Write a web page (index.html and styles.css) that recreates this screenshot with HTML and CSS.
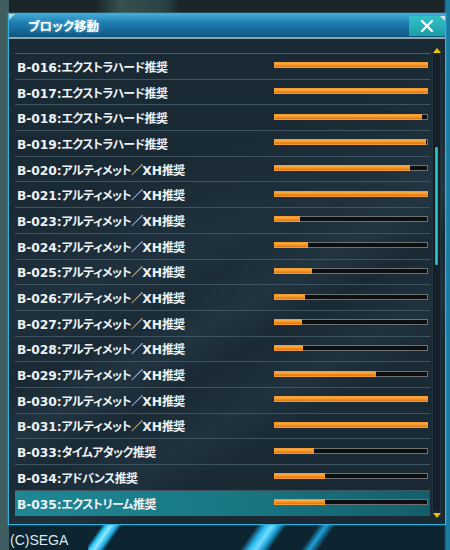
FILE: index.html
```html
<!DOCTYPE html>
<html lang="ja">
<head>
<meta charset="utf-8">
<title>ブロック移動</title>
<link rel="stylesheet" href="styles.css">
</head>
<body>
<div class="scene">
  <div class="window">
    <div class="titlebar">
      <span class="title">ブロック移動</span>
      <button class="close" aria-label="閉じる">
        <svg width="14" height="14" viewBox="0 0 14 14"><path d="M2 2 L12 12 M12 2 L2 12" stroke="#fff" stroke-width="2.2" stroke-linecap="round"/></svg>
      </button>
    </div>
    <div class="rule"></div>
    <div class="body">
      <ul class="list">
        <li class="row"><span class="name"><span class="code">B-016:</span>エクストラハード推奨</span><span class="bar"><span class="fill" style="width:100%"></span></span></li>
        <li class="row"><span class="name"><span class="code">B-017:</span>エクストラハード推奨</span><span class="bar"><span class="fill" style="width:100%"></span></span></li>
        <li class="row"><span class="name"><span class="code">B-018:</span>エクストラハード推奨</span><span class="bar"><span class="fill" style="width:96%"></span></span></li>
        <li class="row"><span class="name"><span class="code">B-019:</span>エクストラハード推奨</span><span class="bar"><span class="fill" style="width:99%"></span></span></li>
        <li class="row"><span class="name"><span class="code">B-020:</span>アルティメット／<span class="code">XH</span>推奨</span><span class="bar"><span class="fill" style="width:88%"></span></span></li>
        <li class="row"><span class="name"><span class="code">B-021:</span>アルティメット／<span class="code">XH</span>推奨</span><span class="bar"><span class="fill" style="width:100%"></span></span></li>
        <li class="row"><span class="name"><span class="code">B-023:</span>アルティメット／<span class="code">XH</span>推奨</span><span class="bar"><span class="fill" style="width:16%"></span></span></li>
        <li class="row"><span class="name"><span class="code">B-024:</span>アルティメット／<span class="code">XH</span>推奨</span><span class="bar"><span class="fill" style="width:21%"></span></span></li>
        <li class="row"><span class="name"><span class="code">B-025:</span>アルティメット／<span class="code">XH</span>推奨</span><span class="bar"><span class="fill" style="width:24%"></span></span></li>
        <li class="row"><span class="name"><span class="code">B-026:</span>アルティメット／<span class="code">XH</span>推奨</span><span class="bar"><span class="fill" style="width:19%"></span></span></li>
        <li class="row"><span class="name"><span class="code">B-027:</span>アルティメット／<span class="code">XH</span>推奨</span><span class="bar"><span class="fill" style="width:17%"></span></span></li>
        <li class="row"><span class="name"><span class="code">B-028:</span>アルティメット／<span class="code">XH</span>推奨</span><span class="bar"><span class="fill" style="width:18%"></span></span></li>
        <li class="row"><span class="name"><span class="code">B-029:</span>アルティメット／<span class="code">XH</span>推奨</span><span class="bar"><span class="fill" style="width:66%"></span></span></li>
        <li class="row"><span class="name"><span class="code">B-030:</span>アルティメット／<span class="code">XH</span>推奨</span><span class="bar"><span class="fill" style="width:100%"></span></span></li>
        <li class="row"><span class="name"><span class="code">B-031:</span>アルティメット／<span class="code">XH</span>推奨</span><span class="bar"><span class="fill" style="width:100%"></span></span></li>
        <li class="row"><span class="name"><span class="code">B-033:</span>タイムアタック推奨</span><span class="bar"><span class="fill" style="width:25%"></span></span></li>
        <li class="row"><span class="name"><span class="code">B-034:</span>アドバンス推奨</span><span class="bar"><span class="fill" style="width:32%"></span></span></li>
        <li class="row selected"><span class="name"><span class="code">B-035:</span>エクストリーム推奨</span><span class="bar"><span class="fill" style="width:32%"></span></span></li>
      </ul>
      <div class="scroll">
        <span class="arrow up"></span>
        <div class="track"><span class="thumb"></span></div>
        <span class="arrow down"></span>
      </div>
    </div>
  </div>
  <div class="copy">(C)SEGA</div>
</div>
</body>
</html>
```

FILE: styles.css
```css
* { box-sizing: border-box; }
html, body { margin: 0; padding: 0; }
body {
  width: 450px;
  height: 550px;
  overflow: hidden;
  font-family: "Noto Sans CJK JP", "Noto Sans", sans-serif;
  background:
    linear-gradient(125deg, transparent 0 18%, #28c8ff 24%, #8fe8ff 30%, #20a8e0 38%, transparent 44%) 88px 525px / 60px 25px no-repeat,
    linear-gradient(125deg, transparent 0 22%, #2ab8f0 32%, #70dcff 40%, #1a9ad0 48%, transparent 56%) 238px 525px / 70px 25px no-repeat,
    linear-gradient(125deg, transparent 0 30%, #1fa0d8 42%, transparent 56%) 298px 525px / 50px 25px no-repeat,
    linear-gradient(90deg, #3f5d5e 0 9px, transparent 9px),
    linear-gradient(90deg, transparent 0 95px, #35514f 120px, #2a4244 165px, transparent 180px) 0 0 / 450px 14px no-repeat,
    linear-gradient(90deg, transparent 0 444px, #1c7aa0 446px),
    linear-gradient(180deg, #1b2427 0 14px, #0c2530 14px 100%);
}
.scene {
  display: flex;
  flex-direction: column;
  padding: 13px 0 0 8px;
}
.window {
  width: 438px;
  height: 512px;
  border: 1px solid #35b0dc;
  background:
    linear-gradient(150deg, transparent 0 50%, rgba(90,140,160,0.10) 56%, transparent 62%, rgba(90,140,160,0.08) 70%, transparent 76%),
    linear-gradient(160deg, transparent 0 30%, rgba(90,140,160,0.07) 45%, transparent 55%),
    #1a2a35;
  display: flex;
  flex-direction: column;
  box-shadow: 0 0 2px rgba(60,200,255,0.6);
}
.titlebar {
  height: 23px;
  display: flex;
  align-items: center;
  justify-content: space-between;
  background: linear-gradient(180deg, #45acd8 0%, #1f80b4 35%, #0f5680 100%);
  position: relative;
}
.titlebar::before {
  content: "";
  position: absolute;
  left: 0; top: 0;
  width: 0; height: 0;
  border-top: 6px solid #b8d4e0;
  border-right: 6px solid transparent;
}
.title {
  color: #fff;
  font-size: 12.5px;
  font-weight: 700;
  padding-left: 19px;
  font-feature-settings: "palt";
  text-shadow: 0 0 3px rgba(160,230,255,0.8);
}
.close {
  width: 36px;
  height: 20px;
  margin: 1px 0 0 0;
  border: none;
  padding: 0;
  background: linear-gradient(180deg, #33c2c8, #1e9ca6);
  display: flex;
  align-items: center;
  justify-content: center;
  position: relative;
}
.close::after {
  content: "";
  position: absolute;
  right: 0; top: 0;
  border-top: 5px solid #d8e8ee;
  border-left: 5px solid transparent;
}
.rule {
  height: 2px;
  background: #8fa5ae;
}
.body {
  flex: 1;
  display: flex;
  gap: 2px;
  padding: 14px 4px 0 6px;
}
.list {
  flex: 1;
  list-style: none;
  margin: 0;
  padding: 0;
  border-top: 1px solid #4a5f6b;
  align-self: flex-start;
}
.row {
  height: 25.7px;
  border-bottom: 1px solid #3f5461;
  display: flex;
  align-items: center;
  justify-content: space-between;
  padding: 0 2px 0 2px;
}
.row.selected {
  background: linear-gradient(90deg, #1f8794 0%, #1a7885 50%, #145e6c 100%);
  border-bottom-color: transparent;
}
.name {
  color: #eef2f4;
  font-size: 12px;
  font-weight: 700;
  font-feature-settings: "palt";
  white-space: nowrap;
  letter-spacing: -0.6px;
}
.code {
  font-family: "DejaVu Sans", "Noto Sans", sans-serif;
  font-size: 12.3px;
  letter-spacing: -0.1px;
}
.bar {
  width: 154px;
  height: 6px;
  border: 1px solid #6d7275;
  background: #0c0e0f;
  display: flex;
  margin-top: -2px;
}
.fill {
  height: 100%;
  background: linear-gradient(180deg, #f9b24c 0%, #f28c1f 60%, #d9760f 100%);
  box-shadow: 0 0 0 1px #f39a30;
}
.scroll {
  width: 9px;
  height: 470px;
  display: flex;
  flex-direction: column;
  align-items: center;
  margin-top: -5px;
}
.arrow {
  width: 0; height: 0;
  border-left: 4px solid transparent;
  border-right: 4px solid transparent;
  flex: none;
}
.arrow.up { border-bottom: 5px solid #f2c200; }
.arrow.down { border-top: 5px solid #f2c200; }
.track {
  flex: 1;
  width: 9px;
  margin: 2px 0;
  background: #142029;
  border-left: 1px solid #24343e;
  border-right: 1px solid #24343e;
  display: flex;
  justify-content: center;
  padding-top: 92px;
}
.thumb {
  width: 3px;
  height: 118px;
  background: linear-gradient(90deg, #16a4a0, #2ac8c0, #16a4a0);
  border-radius: 1px;
}
.copy {
  margin-top: 7px;
  margin-left: 2px;
  color: #dfe6ea;
  font-family: "Liberation Sans", "Noto Sans", sans-serif;
  font-size: 14px;
}
```
